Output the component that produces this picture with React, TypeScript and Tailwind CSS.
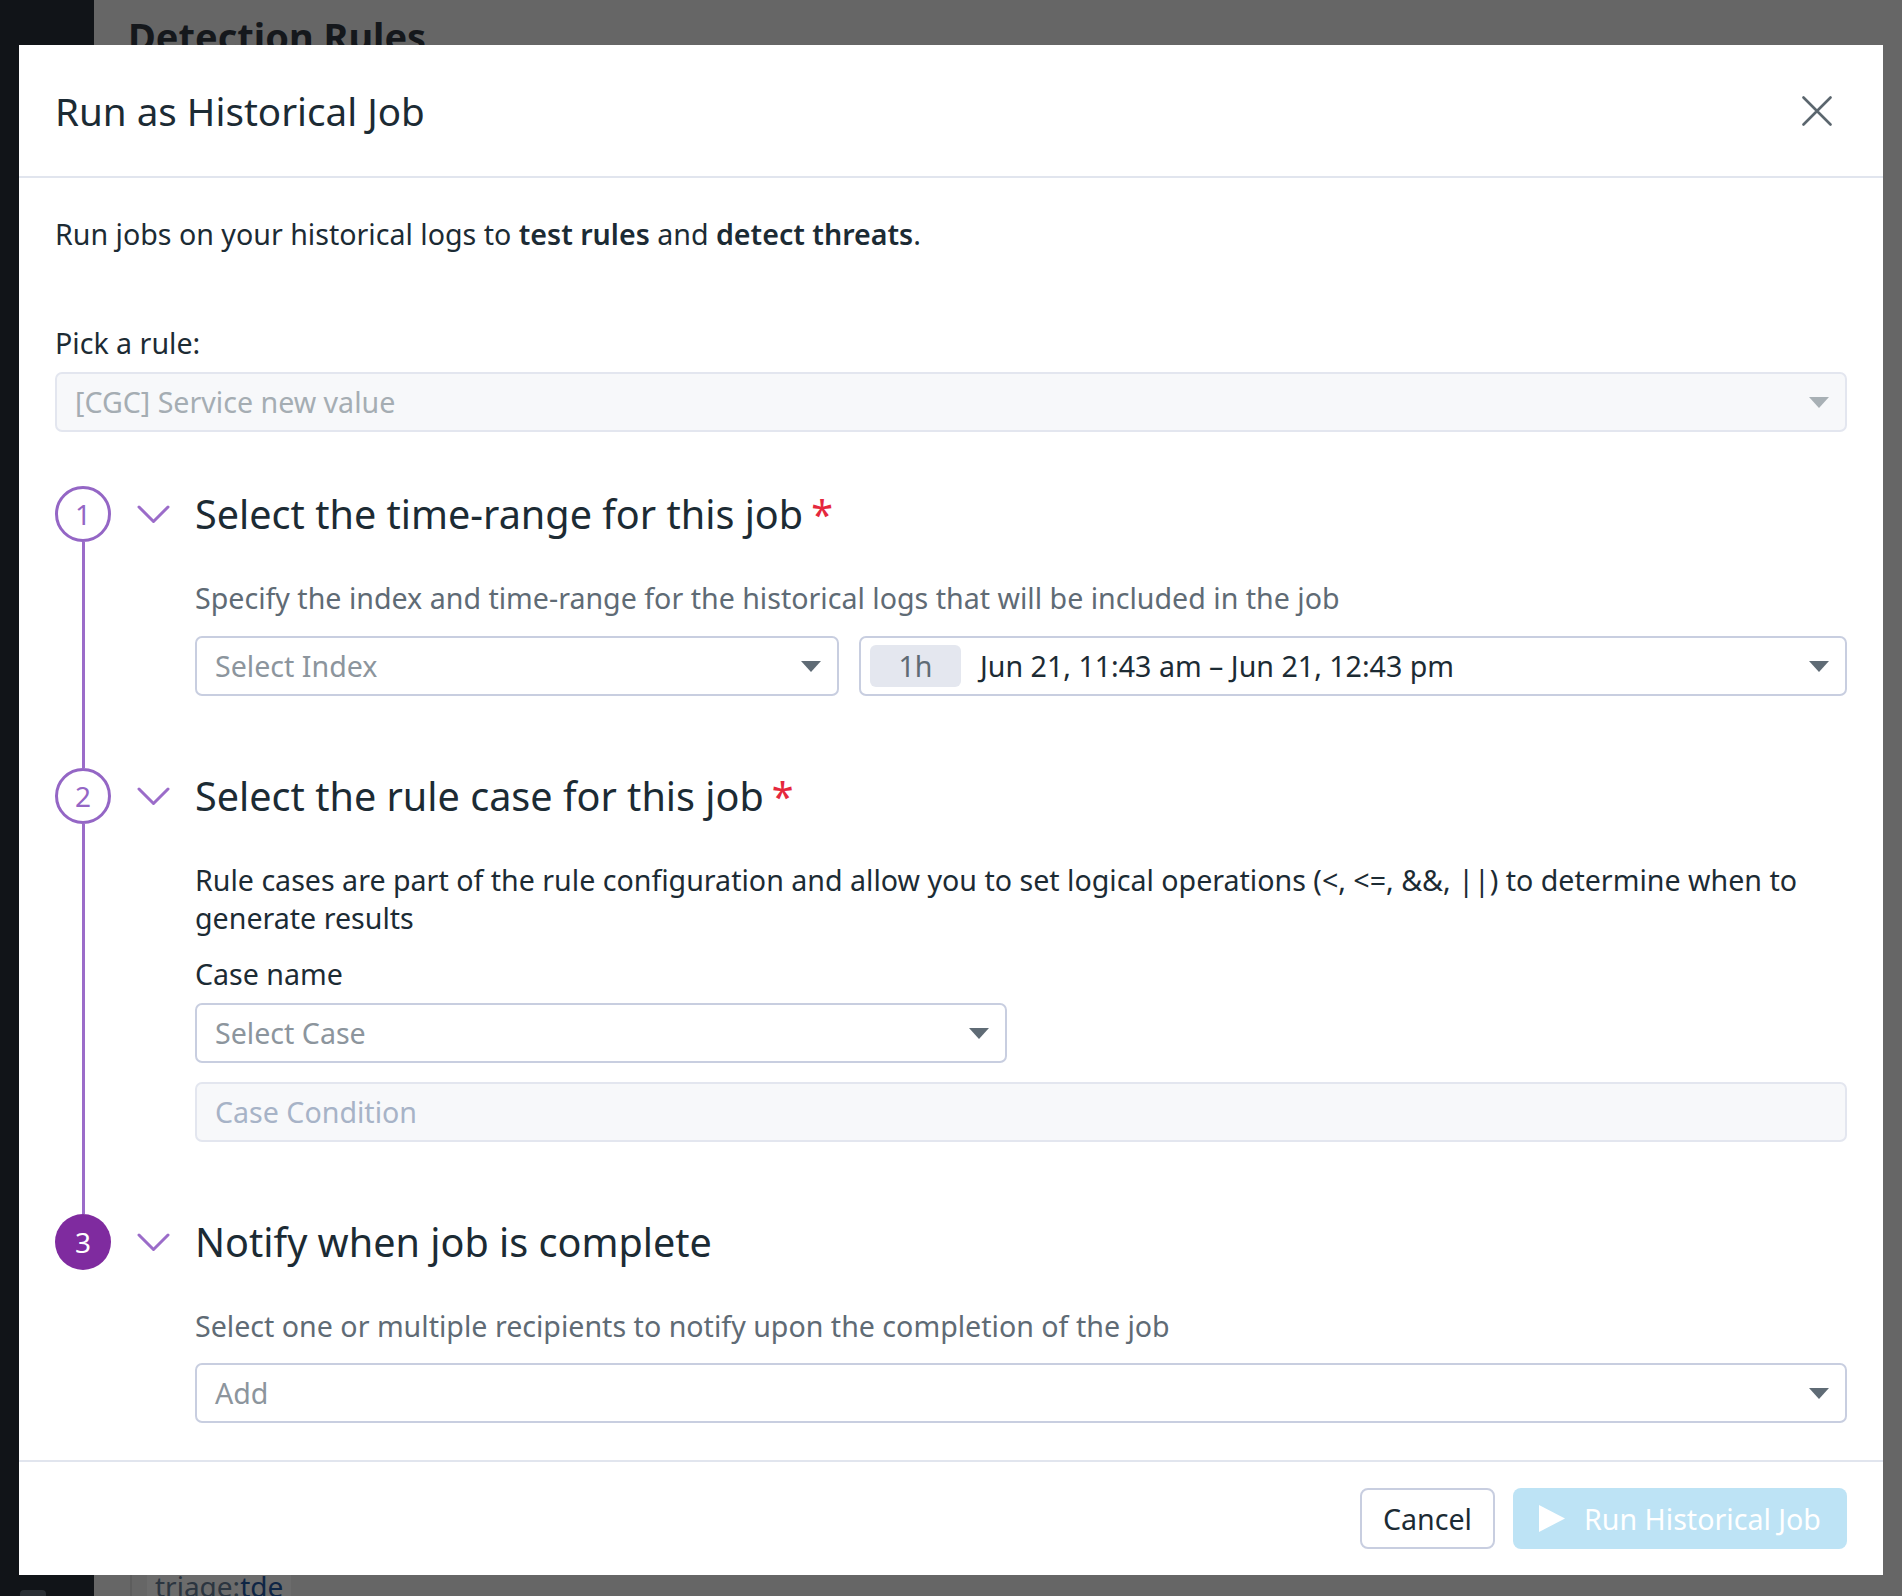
const Caret = ({ color = "#5f6b75" }: { color?: string }) => (
  <svg width="20" height="11" viewBox="0 0 20 11">
    <polygon points="0,0 20,0 10,11" fill={color} />
  </svg>
);

const Chevron = () => (
  <svg width="33" height="19" viewBox="0 0 33 19" className="shrink-0">
    <path d="M2 2 L16.5 16.5 L31 2" fill="none" stroke="#9b6cc9" strokeWidth="3" strokeLinecap="round" strokeLinejoin="round" />
  </svg>
);

function StepHead({ title, required }: { title: string; required?: boolean }) {
  return (
    <div className="flex items-center h-[56px]">
      <Chevron />
      <h3 className="ml-[25px] text-[39.6px] leading-[56px] text-[#1c2b34] whitespace-nowrap">
        {title}
        {required && <span className="ml-[8px] text-[#e5283d]">*</span>}
      </h3>
    </div>
  );
}

function Circle({ n, filled }: { n: number; filled?: boolean }) {
  return filled ? (
    <div className="w-[56px] h-[56px] shrink-0 rounded-full bg-[#7f2b9f] text-white flex items-center justify-center text-[28px]">{n}</div>
  ) : (
    <div className="w-[56px] h-[56px] shrink-0 rounded-full border-[3px] border-[#9466c5] text-[#9466c5] flex items-center justify-center text-[28px]">{n}</div>
  );
}

function Select({ text, className = "" }: { text: string; className?: string }) {
  return (
    <div className={`h-[60px] border-2 border-[#c8cee0] rounded-[7px] bg-white flex items-center justify-between pl-[18px] pr-[16px] ${className}`}>
      <span className="text-[#8c959d]">{text}</span>
      <Caret />
    </div>
  );
}

export default function App() {
  return (
    <div className="relative w-[1902px] h-[1596px] overflow-hidden bg-[#666666] font-['Noto_Sans',sans-serif]">
      {/* page behind the overlay */}
      <div className="flex h-full">
        <div className="w-[94px] h-full bg-[#111418] flex flex-col justify-end">
          <div className="ml-[20px] w-[26px] h-[6px] rounded-t-[4px] bg-[#2a2f35]"></div>
        </div>
        <div className="flex-1 flex flex-col justify-between">
          <div className="pl-[34px] pt-[12px] text-[38px] font-bold text-[#15181c] leading-[48px]">Detection Rules</div>
          <div className="flex h-[21px] ml-[36px] border-l-2 border-[#5d5d5d]">
            <div className="ml-[15px] px-[8px] bg-[#6c6c6c] text-[28px] leading-[30px] -mt-[4px]">
              <span className="text-[#2b3540]">triage:</span>
              <span className="text-[#0e2545]">tde</span>
            </div>
          </div>
        </div>
      </div>

      {/* modal */}
      <div className="absolute left-[19px] top-[45px] w-[1864px] h-[1530px] bg-white flex flex-col text-[28.6px] leading-[38px] text-[#1c2b34]">
        <div className="h-[133px] shrink-0 border-b-2 border-[#e1e5ee] flex items-center justify-between pl-[36px] pr-[51px]">
          <h2 className="text-[38.6px] text-[#1c2b34]">Run as Historical Job</h2>
          <svg width="30" height="30" viewBox="0 0 30 30">
            <path d="M1.5 1.5 L28.5 28.5 M28.5 1.5 L1.5 28.5" stroke="#5b666e" strokeWidth="2.6" strokeLinecap="round" />
          </svg>
        </div>

        <div className="flex-1 px-[36px] pt-[37px]">
          <p>
            Run jobs on your historical logs to <span className="font-semibold">test rules</span> and{" "}
            <span className="font-semibold">detect threats</span>.
          </p>
          <p className="mt-[71px]">Pick a rule:</p>
          <div className="mt-[10px] h-[60px] border-2 border-[#e3e6ef] rounded-[7px] bg-[#f7f8fa] flex items-center justify-between pl-[18px] pr-[16px]">
            <span className="text-[#a5adb3]">[CGC] Service new value</span>
            <Caret color="#a8b0b5" />
          </div>

          {/* step 1 */}
          <div className="mt-[54px] flex">
            <div className="flex flex-col items-center w-[56px]">
              <Circle n={1} />
              <div className="flex-1 w-[3px] bg-[#9b6cc9]"></div>
            </div>
            <div className="flex-1 ml-[26px]">
              <StepHead title="Select the time-range for this job" required />
              <div className="pl-[58px] pt-[37px] pb-[72px]">
                <p className="text-[#5f6b75]">Specify the index and time-range for the historical logs that will be included in the job</p>
                <div className="mt-[19px] flex gap-[20px]">
                  <Select text="Select Index" className="w-[644px]" />
                  <div className="flex-1 h-[60px] border-2 border-[#c8cee0] rounded-[7px] bg-white flex items-center justify-between pl-[9px] pr-[16px]">
                    <div className="flex items-center">
                      <span className="w-[91px] h-[42px] rounded-[6px] bg-[#e4e7ef] text-[#5f6b75] flex items-center justify-center">1h</span>
                      <span className="ml-[19px]">Jun 21, 11:43 am – Jun 21, 12:43 pm</span>
                    </div>
                    <Caret />
                  </div>
                </div>
              </div>
            </div>
          </div>

          {/* step 2 */}
          <div className="flex">
            <div className="flex flex-col items-center w-[56px]">
              <Circle n={2} />
              <div className="flex-1 w-[3px] bg-[#9b6cc9]"></div>
            </div>
            <div className="flex-1 ml-[26px]">
              <StepHead title="Select the rule case for this job" required />
              <div className="pl-[58px] pt-[37px] pb-[72px]">
                <p>
                  Rule cases are part of the rule configuration and allow you to set logical operations (&lt;, &lt;=, &amp;&amp;, ||) to determine when to generate results
                </p>
                <p className="mt-[18px]">Case name</p>
                <Select text="Select Case" className="mt-[10px] w-[812px]" />
                <div className="mt-[19px] h-[60px] border-2 border-[#e3e6ef] rounded-[7px] bg-[#f7f8fa] flex items-center pl-[18px]">
                  <span className="text-[#a7b3c7]">Case Condition</span>
                </div>
              </div>
            </div>
          </div>

          {/* step 3 */}
          <div className="flex">
            <div className="flex flex-col items-center w-[56px]">
              <Circle n={3} filled />
            </div>
            <div className="flex-1 ml-[26px]">
              <StepHead title="Notify when job is complete" />
              <div className="pl-[58px] pt-[37px]">
                <p className="text-[#5f6b75]">Select one or multiple recipients to notify upon the completion of the job</p>
                <Select text="Add" className="mt-[18px]" />
              </div>
            </div>
          </div>
        </div>

        <div className="h-[115px] shrink-0 border-t-2 border-[#e1e5ee] flex items-center justify-end gap-[18px] px-[36px]">
          <button className="h-[61px] w-[135px] border-2 border-[#c8cee0] rounded-[8px] bg-white text-[#1c2b34]">Cancel</button>
          <button className="h-[61px] w-[334px] rounded-[8px] bg-[#bde3f5] text-white flex items-center justify-center gap-[19px]">
            <svg width="26" height="27" viewBox="0 0 26 27">
              <polygon points="0,0 26,13.5 0,27" fill="white" />
            </svg>
            Run Historical Job
          </button>
        </div>
      </div>
    </div>
  );
}
